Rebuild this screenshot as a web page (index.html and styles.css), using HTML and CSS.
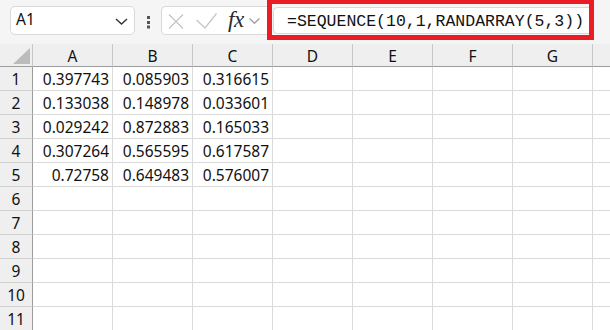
FILE: index.html
```html
<!DOCTYPE html>
<html>
<head>
<meta charset="utf-8">
<link rel="stylesheet" href="styles.css">
</head>
<body>
<div class="toolbar">
  <div class="namebox">
    <span class="ref">A1</span>
    <svg class="chev" width="13" height="7" viewBox="0 0 13 7"><path d="M1 1 L6.5 6 L12 1" fill="none" stroke="#333" stroke-width="1.4"/></svg>
  </div>
  <svg class="dots" width="3" height="13" viewBox="0 0 3 13"><rect x="0" y="0" width="3" height="3" fill="#555"/><rect x="0" y="5" width="3" height="3" fill="#555"/><rect x="0" y="9.5" width="3" height="3" fill="#555"/></svg>
  <div class="fxbox">
    <svg class="ico-x" width="16" height="15" viewBox="0 0 16 15"><path d="M1 0.5 L15 14.5 M15 0.5 L1 14.5" stroke="#c6c6c6" stroke-width="1.3" fill="none"/></svg>
    <svg class="ico-ok" width="21" height="16" viewBox="0 0 21 16"><path d="M0.5 7 L9 15 L20.5 0.5" stroke="#c6c6c6" stroke-width="1.3" fill="none"/></svg>
    <span class="fx">fx</span>
    <svg class="chev-sm" width="11" height="6" viewBox="0 0 11 6"><path d="M0.5 0.5 L5.5 5.3 L10.5 0.5" fill="none" stroke="#9a9a9a" stroke-width="1.2"/></svg>
  </div>
  <div class="formula">
    <div class="input">=SEQUENCE(10,1,RANDARRAY(5,3))</div>
  </div>
</div>
<div class="sheet-wrap">
<div class="sheet">
  <div class="corner"><div class="tri"></div></div>
  <div class="ch">A</div><div class="ch">B</div><div class="ch">C</div><div class="ch">D</div><div class="ch">E</div><div class="ch">F</div><div class="ch">G</div><div class="ch"></div>

  <div class="rh">1</div><div class="c">0.397743</div><div class="c">0.085903</div><div class="c">0.316615</div><div class="c"></div><div class="c"></div><div class="c"></div><div class="c"></div><div class="c"></div>
  <div class="rh">2</div><div class="c">0.133038</div><div class="c">0.148978</div><div class="c">0.033601</div><div class="c"></div><div class="c"></div><div class="c"></div><div class="c"></div><div class="c"></div>
  <div class="rh">3</div><div class="c">0.029242</div><div class="c">0.872883</div><div class="c">0.165033</div><div class="c"></div><div class="c"></div><div class="c"></div><div class="c"></div><div class="c"></div>
  <div class="rh">4</div><div class="c">0.307264</div><div class="c">0.565595</div><div class="c">0.617587</div><div class="c"></div><div class="c"></div><div class="c"></div><div class="c"></div><div class="c"></div>
  <div class="rh">5</div><div class="c">0.72758</div><div class="c">0.649483</div><div class="c">0.576007</div><div class="c"></div><div class="c"></div><div class="c"></div><div class="c"></div><div class="c"></div>
  <div class="rh">6</div><div class="c"></div><div class="c"></div><div class="c"></div><div class="c"></div><div class="c"></div><div class="c"></div><div class="c"></div><div class="c"></div>
  <div class="rh">7</div><div class="c"></div><div class="c"></div><div class="c"></div><div class="c"></div><div class="c"></div><div class="c"></div><div class="c"></div><div class="c"></div>
  <div class="rh">8</div><div class="c"></div><div class="c"></div><div class="c"></div><div class="c"></div><div class="c"></div><div class="c"></div><div class="c"></div><div class="c"></div>
  <div class="rh">9</div><div class="c"></div><div class="c"></div><div class="c"></div><div class="c"></div><div class="c"></div><div class="c"></div><div class="c"></div><div class="c"></div>
  <div class="rh">10</div><div class="c"></div><div class="c"></div><div class="c"></div><div class="c"></div><div class="c"></div><div class="c"></div><div class="c"></div><div class="c"></div>
  <div class="rh">11</div><div class="c"></div><div class="c"></div><div class="c"></div><div class="c"></div><div class="c"></div><div class="c"></div><div class="c"></div><div class="c"></div>
</div>
</div>
</body>
</html>
```
FILE: styles.css
```css
html, body {
  margin: 0;
  padding: 0;
  width: 610px;
  height: 330px;
  overflow: hidden;
  background: #ffffff;
  font-family: "Noto Sans", "Liberation Sans", sans-serif;
  color: #111;
}

.toolbar {
  height: 44px;
  background: #f5f5f5;
  display: flex;
  align-items: flex-start;
  box-sizing: border-box;
}

.namebox {
  margin-top: 6px;
  margin-left: 10px;
  width: 125px;
  height: 29px;
  box-sizing: border-box;
  background: #fff;
  border: 1px solid #d9d9d9;
  border-radius: 5px;
  display: flex;
  align-items: center;
  padding-left: 5px;
  padding-right: 6px;
}

.ref {
  flex: 1;
  font-size: 15.5px;
  color: #111;
  line-height: 1;
  padding-bottom: 1px;
}

.chev {
  margin-top: 1px;
}

.dots {
  margin-left: 12px;
  margin-top: 16px;
}

.fxbox {
  margin-left: 11px;
  margin-top: 6px;
  width: 106px;
  height: 29px;
  box-sizing: border-box;
  background: #fff;
  border: 1px solid #d9d9d9;
  border-right: none;
  border-radius: 5px 0 0 5px;
  display: flex;
  align-items: center;
  padding-left: 6px;
}

.ico-x {
  margin-top: 1px;
}

.ico-ok {
  margin-left: 12px;
}

.fx {
  margin-left: 11px;
  font-family: "Liberation Serif", "DejaVu Serif", serif;
  font-style: italic;
  font-size: 23px;
  color: #2a2a2a;
  line-height: 1;
  margin-top: -2px;
  letter-spacing: -0.5px;
}

.chev-sm {
  margin-left: 5px;
  margin-top: 1px;
}

.formula {
  margin-top: -1px;
  width: 327px;
  height: 41px;
  box-sizing: border-box;
  border: 5px solid #ec1c24;
  background: #f5f5f5;
  display: flex;
}

.input {
  flex: 1;
  margin-top: 3px;
  margin-bottom: 1px;
  margin-left: 1px;
  background: #fff;
  border: 1px solid #d9d9d9;
  border-right: none;
  border-radius: 5px 0 0 5px;
  font-family: "Liberation Mono", "DejaVu Sans Mono", monospace;
  font-size: 16.5px;
  color: #111;
  display: flex;
  align-items: center;
  padding-left: 13px;
  white-space: nowrap;
  padding-top: 1px;
}

.sheet-wrap {
  width: 610px;
  height: 286px;
  overflow: hidden;
}

.sheet {
  display: grid;
  grid-template-columns: 33px repeat(7, 80px) 18px;
  grid-template-rows: 23px;
  grid-auto-rows: 24px;
  width: 611px;
  font-size: 15.5px;
}

.sheet > div {
  box-sizing: border-box;
  border-right: 1px solid #dadada;
  border-bottom: 1px solid #dadada;
}

.sheet > .corner {
  background: #efefef;
  border-right: 1px solid #c8c8c8;
  border-bottom: 1px solid #9c9c9c;
  display: flex;
  align-items: flex-end;
  justify-content: flex-end;
  padding: 0 2px 2px 0;
}

.tri {
  width: 17px;
  height: 16px;
  background: #bcbcbc;
  clip-path: polygon(100% 0, 100% 100%, 0 100%);
}

.sheet > .ch {
  background: #efefef;
  border-right: 1px solid #c8c8c8;
  border-bottom: 1px solid #9c9c9c;
  display: flex;
  align-items: center;
  justify-content: center;
  padding-top: 1px;
}

.sheet > .rh {
  background: #efefef;
  border-right: 1px solid #9c9c9c;
  border-bottom: 1px solid #d2d2d2;
  display: flex;
  align-items: center;
  justify-content: center;
  padding-top: 1px;
}

.sheet > .c {
  display: flex;
  align-items: center;
  justify-content: flex-end;
  padding-right: 3px;
  padding-top: 1px;
  white-space: nowrap;
}
```
